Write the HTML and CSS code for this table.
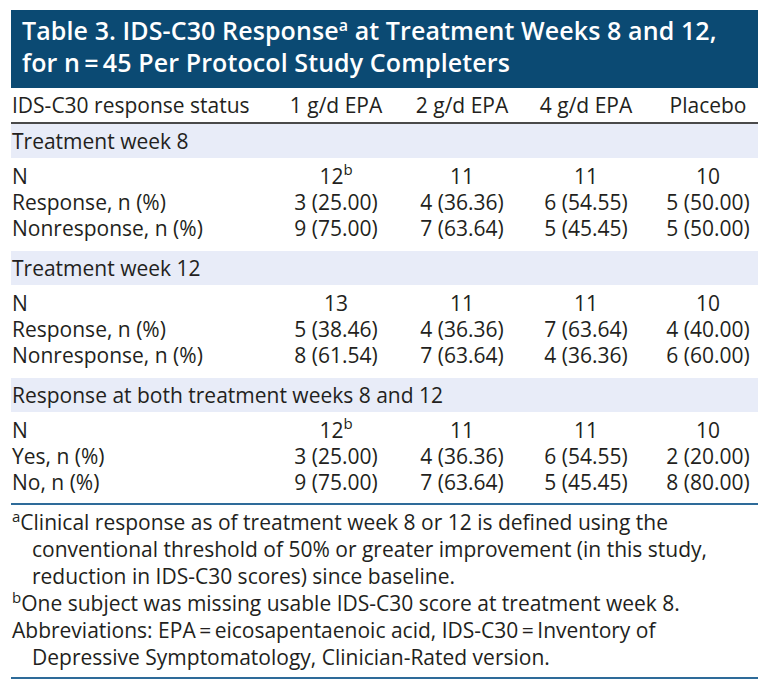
FILE: index.html
```html
<!DOCTYPE html>
<html>
<head>
<meta charset="utf-8">
<link rel="stylesheet" href="styles.css">
</head>
<body>
<div class="wrap">
  <div class="title">Table 3. IDS-C30 Response<sup>a</sup> at Treatment Weeks 8 and 12,<br>for n&#8201;=&#8201;45 Per Protocol Study Completers</div>
  <table class="data">
    <colgroup>
      <col class="c0"><col class="c1"><col class="c2"><col class="c3"><col class="c4">
    </colgroup>
    <thead>
      <tr class="head"><th class="lab">IDS-C30 response status</th><th>1 g/d EPA</th><th>2 g/d EPA</th><th>4 g/d EPA</th><th class="last">Placebo</th></tr>
    </thead>
    <tbody>
      <tr class="band"><td colspan="5">Treatment week 8</td></tr>
      <tr class="first"><td class="lab">N</td><td>12<sup>b</sup></td><td>11</td><td>11</td><td class="last">10</td></tr>
      <tr><td class="lab">Response, n (%)</td><td>3 (25.00)</td><td>4 (36.36)</td><td>6 (54.55)</td><td class="last">5 (50.00)</td></tr>
      <tr class="end"><td class="lab">Nonresponse, n (%)</td><td>9 (75.00)</td><td>7 (63.64)</td><td>5 (45.45)</td><td class="last">5 (50.00)</td></tr>
      <tr class="band"><td colspan="5">Treatment week 12</td></tr>
      <tr class="first"><td class="lab">N</td><td>13</td><td>11</td><td>11</td><td class="last">10</td></tr>
      <tr><td class="lab">Response, n (%)</td><td>5 (38.46)</td><td>4 (36.36)</td><td>7 (63.64)</td><td class="last">4 (40.00)</td></tr>
      <tr class="end"><td class="lab">Nonresponse, n (%)</td><td>8 (61.54)</td><td>7 (63.64)</td><td>4 (36.36)</td><td class="last">6 (60.00)</td></tr>
      <tr class="band"><td colspan="5">Response at both treatment weeks 8 and 12</td></tr>
      <tr class="first"><td class="lab">N</td><td>12<sup>b</sup></td><td>11</td><td>11</td><td class="last">10</td></tr>
      <tr><td class="lab">Yes, n (%)</td><td>3 (25.00)</td><td>4 (36.36)</td><td>6 (54.55)</td><td class="last">2 (20.00)</td></tr>
      <tr class="final"><td class="lab">No, n (%)</td><td>9 (75.00)</td><td>7 (63.64)</td><td>5 (45.45)</td><td class="last">8 (80.00)</td></tr>
    </tbody>
  </table>
  <div class="notes">
    <p class="fn"><sup>a</sup>Clinical response as of treatment week 8 or 12 is defined using the conventional threshold of 50% or greater improvement (in this study, reduction in IDS-C30 scores) since baseline.</p>
    <p class="fn"><sup>b</sup>One subject was missing usable IDS-C30 score at treatment week 8.</p>
    <p class="ab">Abbreviations: EPA&#8201;=&#8201;eicosapentaenoic acid, IDS-C30&#8201;=&#8201;Inventory of Depressive Symptomatology, Clinician-Rated version.</p>
  </div>
</div>
</body>
</html>
```

FILE: styles.css
```css
html, body {
  margin: 0;
  padding: 0;
  background: #ffffff;
}
body {
  font-family: "Open Sans", "Noto Sans", sans-serif;
  color: #231f20;
}
.wrap {
  width: 747px;
  margin: 10px 0 0 11px;
}
.title {
  background: #0b4a73;
  color: #ffffff;
  font-weight: 600;
  font-size: 25px;
  line-height: 32px;
  padding: 4px 11px 10px 11px;
  letter-spacing: 0.1px;
  white-space: nowrap;
}
.title sup {
  font-size: 16px;
  line-height: 0;
  vertical-align: 9px;
  font-weight: 600;
}
.data {
  width: 747px;
  border-collapse: collapse;
  table-layout: fixed;
  font-size: 21px;
}
.c0 { width: 263px; }
.c1 { width: 124px; }
.c2 { width: 128px; }
.c3 { width: 120px; }
.c4 { width: 112px; }
.data th, .data td {
  padding: 0;
  text-align: center;
  white-space: nowrap;
  font-weight: 400;
}
.data .lab {
  text-align: left;
  padding-left: 1px;
}
.data .last {
  padding-left: 12px;
}
.head th {
  height: 34px;
  border-bottom: 2px solid #4a4a4a;
  vertical-align: middle;
}
.band td {
  background: #e8ecf8;
  height: 34px;
  text-align: left;
  padding-left: 1px;
}
.data tbody tr td {
  height: 26px;
  line-height: 26px;
}
.data tr.band td {
  height: 34px;
  line-height: 34px;
}
.data tr.first td {
  padding-top: 5px;
}
.data tr.end td {
  padding-bottom: 10px;
}
.data tr.final td {
  padding-bottom: 8px;
  border-bottom: 2px solid #2e6b99;
}
.data sup {
  font-size: 15px;
  line-height: 0;
  vertical-align: 9px;
}
.notes {
  padding: 4px 0 6px 0;
  border-bottom: 2px solid #2e6b99;
  font-size: 21px;
  line-height: 27px;
}
.notes p {
  margin: 0;
}
.fn {
  padding-left: 21px;
  text-indent: -20px;
}
.fn sup {
  font-size: 15px;
  line-height: 0;
  vertical-align: 8px;
}
.ab {
  padding-left: 21px;
  text-indent: -20px;
}
```
